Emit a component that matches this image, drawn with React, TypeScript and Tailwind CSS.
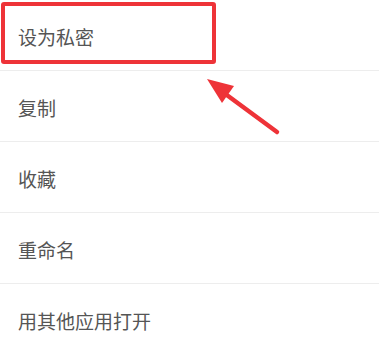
const items = ['设为私密', '复制', '收藏', '重命名', '用其他应用打开'];

export default function App() {
  return (
    <div className="relative h-[352px] w-[379px] overflow-hidden bg-white" style={{ fontFamily: '"Noto Sans CJK SC", "Noto Sans", sans-serif' }}>
      <ul>
        {items.map((t) => (
          <li key={t} className="flex h-[71px] items-center border-b border-[#ededed] pl-[18px] pt-[4px] text-[19px] text-[#555555]">
            {t}
          </li>
        ))}
      </ul>
      {/* highlight box */}
      <div className="absolute left-[1px] top-[2px] h-[62px] w-[215px] rounded-[3px] border-[4px] border-[#ee3338]" />
      {/* arrow */}
      <svg className="absolute left-0 top-0" width="379" height="352" viewBox="0 0 379 352">
        <line x1="277" y1="132" x2="220" y2="90" stroke="#ee3338" strokeWidth="4.5" strokeLinecap="round" />
        <polygon points="207,79 234,86 222,103" fill="#ee3338" />
      </svg>
    </div>
  );
}
